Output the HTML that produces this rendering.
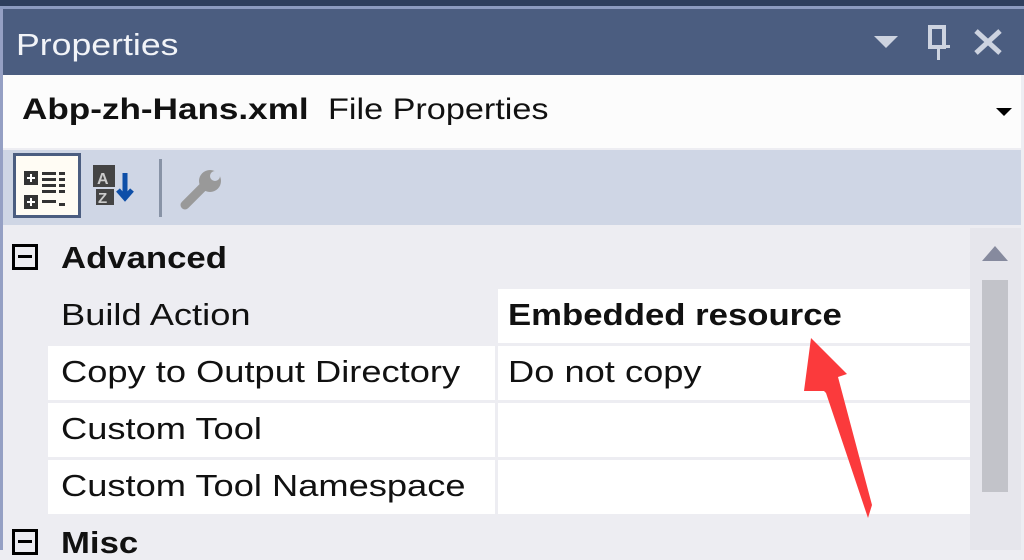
<!DOCTYPE html>
<html><head><style>
*{margin:0;padding:0;box-sizing:border-box}
body{width:1024px;height:550px;overflow:hidden;background:#ededf2;font-family:"Liberation Sans",sans-serif;position:relative}
div{position:absolute}
.t{font-size:31px;color:#111;white-space:nowrap;line-height:1;transform:scaleX(1.17);transform-origin:0 0}
.b{font-weight:bold;transform:scaleX(1.12)}
.w{background:#fff}
</style></head><body>
<div style="left:0;top:0;width:1024px;height:6px;background:#2e3f5e"></div>
<div style="left:0;top:6px;width:1024px;height:3px;background:#8c9bc0"></div>
<div style="left:0;top:9px;width:3px;height:541px;background:#95a0c4"></div>
<div style="left:3px;top:9px;width:1021px;height:66px;background:#4b5d80"></div>
<div class="t" style="left:16px;top:29px;color:#f2f4f8;transform:scaleX(1.15)">Properties</div>
<svg style="position:absolute;left:0;top:0" width="1024" height="75">
<polygon points="874,36 898,36 886,48" fill="#cdd3e0"/>
<rect x="930" y="27" width="14" height="20" fill="none" stroke="#cdd3e0" stroke-width="4"/>
<rect x="928" y="45" width="22" height="3" fill="#cdd3e0"/><rect x="937" y="47" width="3" height="13" fill="#cdd3e0"/>
<path d="M976 31 L1000 53 M1000 31 L976 53" stroke="#cdd3e0" stroke-width="5"/>
</svg>
<div style="left:3px;top:75px;width:1018px;height:73px;background:#fcfcfc"></div>
<div class="t b" style="left:22px;top:95px;font-size:30px;transform:scaleX(1.17)">Abp-zh-Hans.xml</div>
<div class="t" style="left:328px;top:95px;font-size:30px;transform:scaleX(1.14)">File Properties</div>
<svg style="position:absolute;left:996px;top:106px" width="20" height="12"><polygon points="0,2 16,2 8,10" fill="#000"/></svg>
<div style="left:3px;top:150px;width:1018px;height:75px;background:#cfd6e5"></div>
<div style="left:13px;top:153px;width:68px;height:65px;background:#fffcf4;border:3px solid #4b5d80"></div>
<svg style="position:absolute;left:0;top:150px" width="240" height="75">
<g fill="#333">
<rect x="24" y="21" width="14" height="14"/><rect x="24" y="45" width="14" height="14"/>
<rect x="42" y="22" width="14" height="3"/><rect x="42" y="28" width="14" height="3"/><rect x="42" y="34" width="14" height="3"/><rect x="42" y="40" width="14" height="3"/>
<rect x="42" y="50" width="14" height="3"/><rect x="59" y="22" width="6" height="3"/><rect x="59" y="28" width="6" height="3"/><rect x="59" y="34" width="6" height="3"/><rect x="59" y="40" width="6" height="3"/><rect x="59" y="53" width="6" height="3"/>
<rect x="93" y="15" width="22" height="22" fill="#444"/><rect x="96" y="39" width="18" height="16" fill="#444"/>
</g>
<g fill="#fff"><rect x="27" y="27" width="8" height="2"/><rect x="30" y="24" width="2" height="8"/><rect x="27" y="51" width="8" height="2"/><rect x="30" y="48" width="2" height="8"/></g>
<text x="97" y="34" font-size="16" font-weight="bold" fill="#ccc" font-family="Liberation Sans">A</text>
<text x="98" y="53" font-size="15" font-weight="bold" fill="#ccc" font-family="Liberation Sans">Z</text>
<path d="M125 23 V46 M118 40 L125 48 L132 40" stroke="#0e4fa8" stroke-width="5" fill="none"/>
<rect x="159" y="9" width="3" height="58" fill="#8893a6"/>
<path d="M185 55 L206 34" stroke="#999" stroke-width="9" stroke-linecap="round"/>
<circle cx="210" cy="31" r="11" fill="#999"/><circle cx="215" cy="26" r="5" fill="#cfd6e5"/>
</svg>
<div style="left:12px;top:244px;width:26px;height:26px;border:3px solid #000"></div>
<div style="left:18px;top:255px;width:14px;height:3px;background:#000"></div>
<div class="t b" style="left:61px;top:242px">Advanced</div>
<div class="t" style="left:61px;top:299px">Build Action</div>
<div class="w" style="left:498px;top:289px;width:472px;height:54px"></div>
<div class="t b" style="left:508px;top:299px">Embedded resource</div>
<div class="w" style="left:48px;top:346px;width:447px;height:54px"></div>
<div class="w" style="left:498px;top:346px;width:472px;height:54px"></div>
<div class="t" style="left:61px;top:356px">Copy to Output Directory</div>
<div class="t" style="left:508px;top:356px">Do not copy</div>
<div class="w" style="left:48px;top:403px;width:447px;height:54px"></div>
<div class="w" style="left:498px;top:403px;width:472px;height:54px"></div>
<div class="t" style="left:61px;top:413px">Custom Tool</div>
<div class="w" style="left:48px;top:460px;width:447px;height:54px"></div>
<div class="w" style="left:498px;top:460px;width:472px;height:54px"></div>
<div class="t" style="left:61px;top:470px">Custom Tool Namespace</div>
<div style="left:12px;top:529px;width:26px;height:26px;border:3px solid #000"></div>
<div style="left:18px;top:540px;width:14px;height:3px;background:#000"></div>
<div class="t b" style="left:61px;top:527px">Misc</div>
<div style="left:970px;top:228px;width:51px;height:322px;background:#e6e6ec"></div>
<svg style="position:absolute;left:970px;top:228px" width="51" height="40"><polygon points="12,33 38,33 25,18" fill="#868a9e"/></svg>
<div style="left:982px;top:280px;width:26px;height:212px;background:#c2c3c9"></div>
<svg style="position:absolute;left:0;top:0" width="1024" height="550"><polygon points="811,338 847,374 838,377 872,505 868,518 826,393 824,391 804,391" fill="#fb3a3c"/></svg>
</body></html>
